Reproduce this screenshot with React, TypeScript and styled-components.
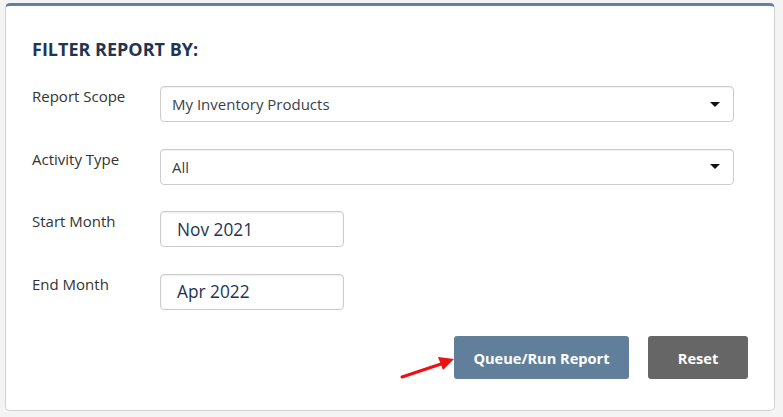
import React from "react";
import styled, { createGlobalStyle } from "styled-components";

const Global = createGlobalStyle`
  html, body { margin: 0; padding: 0; background: #f4f4f4; }
  body { font-family: "Open Sans", "Noto Sans", sans-serif; }
`;

const Page = styled.div`
  padding: 3px 8px 6px 5px;
  box-sizing: border-box;
  width: 783px;
  height: 417px;
`;

const Card = styled.section`
  box-sizing: border-box;
  width: 770px;
  height: 408px;
  background: #ffffff;
  border: 1px solid #d2d2d2;
  border-top: 3px solid #64809b;
  border-radius: 5px;
  padding: 31px 26px 31px 26px;
  display: flex;
  flex-direction: column;
`;

const Title = styled.h2`
  margin: 0;
  font-size: 18px;
  line-height: 25px;
  font-weight: 700;
  color: #1f3552;
`;

const Form = styled.div`
  margin-top: 24px;
  display: flex;
  flex-direction: column;
  gap: 26.5px;
  padding-right: 14px;
`;

const Row = styled.div`
  display: grid;
  grid-template-columns: 128px 1fr;
  align-items: start;
`;

const Label = styled.label`
  font-size: 15px;
  line-height: 20px;
  color: #333333;
`;

const SelectBox = styled.div`
  box-sizing: border-box;
  height: 36px;
  border: 1px solid #cccccc;
  border-radius: 4px;
  box-shadow: inset 0 1px 1px rgba(0, 0, 0, 0.06);
  display: flex;
  align-items: center;
  justify-content: space-between;
  padding: 0 13px 0 11px;
  font-size: 15px;
  color: #3a3f4a;
`;

const Caret = styled.span`
  width: 0;
  height: 0;
  border-left: 5px solid transparent;
  border-right: 5px solid transparent;
  border-top: 5px solid #111;
`;

const MonthInput = styled.div`
  box-sizing: border-box;
  width: 184px;
  height: 36px;
  border: 1px solid #cccccc;
  border-radius: 4px;
  box-shadow: inset 0 1px 2px rgba(0, 0, 0, 0.08);
  display: flex;
  align-items: center;
  padding-left: 16px;
  font-size: 17.3px;
  color: #1d3554;
`;

const Actions = styled.div`
  margin-top: auto;
  display: flex;
  justify-content: flex-end;
  gap: 19px;
  position: relative;
`;

const Button = styled.button<{ $tone: "primary" | "neutral" }>`
  height: 43px;
  width: ${(p) => (p.$tone === "primary" ? "175px" : "100px")};
  border: none;
  border-radius: 3px;
  background: ${(p) => (p.$tone === "primary" ? "#617f9a" : "#666666")};
  color: #ffffff;
  font-family: "Open Sans", "Noto Sans", sans-serif;
  font-weight: 700;
  font-size: 14.6px;
  padding: 0;
`;

const Arrow = styled.svg`
  position: absolute;
  left: 370px;
  top: 15px;
  overflow: visible;
`;

export default function App() {
  return (
    <>
      <Global />
      <Page>
        <Card>
          <Title>FILTER REPORT BY:</Title>
          <Form>
            <Row>
              <Label>Report Scope</Label>
              <SelectBox>
                <span>My Inventory Products</span>
                <Caret />
              </SelectBox>
            </Row>
            <Row>
              <Label>Activity Type</Label>
              <SelectBox>
                <span>All</span>
                <Caret />
              </SelectBox>
            </Row>
            <Row>
              <Label>Start Month</Label>
              <MonthInput>Nov 2021</MonthInput>
            </Row>
            <Row>
              <Label>End Month</Label>
              <MonthInput>Apr 2022</MonthInput>
            </Row>
          </Form>
          <Actions>
            <Arrow width="60" height="30" viewBox="0 0 60 30">
              <line x1="0" y1="26" x2="42" y2="12" stroke="#ee1111" strokeWidth="3" strokeLinecap="round" />
              <polygon points="52,8 36,6 41,19" fill="#ee1111" />
            </Arrow>
            <Button $tone="primary">Queue/Run Report</Button>
            <Button $tone="neutral">Reset</Button>
          </Actions>
        </Card>
      </Page>
    </>
  );
}
